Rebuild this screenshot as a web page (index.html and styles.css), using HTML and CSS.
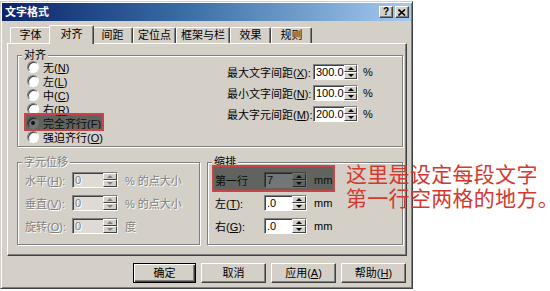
FILE: index.html
```html
<!DOCTYPE html>
<html>
<head>
<title>文字格式</title>
<link rel="stylesheet" href="styles.css">
</head>
<body>
<div class="stage">
    <div class="dialog">
        <div class="titlebar">
            <span class="title">文字格式</span>
            <span class="caps">
                <span class="cap">?</span>
                <span class="cap">
                    <svg width="8" height="7" viewBox="0 0 8 7"><path d="M0.5 0.5 L7 6.5 M7 0.5 L0.5 6.5" stroke="#000" stroke-width="1.6"/></svg>
                </span>
            </span>
        </div>

        <div class="tabs">
            <span class="tab">字体</span>
            <span class="tab active">对齐</span>
            <span class="tab">间距</span>
            <span class="tab">定位点</span>
            <span class="tab">框架与栏</span>
            <span class="tab">效果</span>
            <span class="tab">规则</span>
        </div>

        <div class="page">
            <fieldset class="group">
                <legend>对齐</legend>
                <div class="align-body">
                    <div class="radios">
                        <label class="radio"><span class="dot"></span><span>无(<u>N</u>)</span></label>
                        <label class="radio"><span class="dot"></span><span>左(<u>L</u>)</span></label>
                        <label class="radio"><span class="dot"></span><span>中(<u>C</u>)</span></label>
                        <label class="radio"><span class="dot"></span><span>右(<u>R</u>)</span></label>
                        <label class="radio mark"><span class="dot on"></span><span>完全齐行(<u>F</u>)</span></label>
                        <label class="radio"><span class="dot"></span><span>强迫齐行(<u>O</u>)</span></label>
                    </div>
                    <div class="spacing">
                        <div class="row">
                            <span class="lbl">最大文字间距(<u>X</u>):</span>
                            <span class="field"><span class="val">300.0</span><span class="spin"><i class="up"></i><i class="down"></i></span></span>
                            <span class="unit">%</span>
                        </div>
                        <div class="row">
                            <span class="lbl">最小文字间距(<u>N</u>):</span>
                            <span class="field"><span class="val">100.0</span><span class="spin"><i class="up"></i><i class="down"></i></span></span>
                            <span class="unit">%</span>
                        </div>
                        <div class="row">
                            <span class="lbl">最大字元间距(<u>M</u>):</span>
                            <span class="field"><span class="val">200.0</span><span class="spin"><i class="up"></i><i class="down"></i></span></span>
                            <span class="unit">%</span>
                        </div>
                    </div>
                </div>
            </fieldset>

            <div class="lower">
                <fieldset class="group shift disabled">
                    <legend>字元位移</legend>
                    <div class="rows">
                        <div class="row">
                            <span class="lbl">水平(<u>H</u>):</span>
                            <span class="field"><span class="val">0</span><span class="spin"><i class="up"></i><i class="down"></i></span></span>
                            <span class="unit">% 的点大小</span>
                        </div>
                        <div class="row">
                            <span class="lbl">垂直(<u>V</u>):</span>
                            <span class="field"><span class="val">0</span><span class="spin"><i class="up"></i><i class="down"></i></span></span>
                            <span class="unit">% 的点大小</span>
                        </div>
                        <div class="row">
                            <span class="lbl">旋转(<u>O</u>):</span>
                            <span class="field"><span class="val">0</span><span class="spin"><i class="up"></i><i class="down"></i></span></span>
                            <span class="unit">度</span>
                        </div>
                    </div>
                </fieldset>

                <fieldset class="group indent">
                    <legend>缩排</legend>
                    <div class="rows">
                        <div class="row mark">
                            <span class="lbl">第一行</span>
                            <span class="field"><span class="val">7</span><span class="spin"><i class="up"></i><i class="down"></i></span></span>
                            <span class="unit">mm</span>
                        </div>
                        <div class="row">
                            <span class="lbl">左(<u>T</u>):</span>
                            <span class="field"><span class="val">.0</span><span class="spin"><i class="up"></i><i class="down"></i></span></span>
                            <span class="unit">mm</span>
                        </div>
                        <div class="row">
                            <span class="lbl">右(<u>G</u>):</span>
                            <span class="field"><span class="val">.0</span><span class="spin"><i class="up"></i><i class="down"></i></span></span>
                            <span class="unit">mm</span>
                        </div>
                    </div>
                </fieldset>
            </div>
        </div>

        <div class="actions">
            <button class="btn default">确定</button>
            <button class="btn">取消</button>
            <button class="btn">应用(<u>A</u>)</button>
            <button class="btn">帮助(<u>H</u>)</button>
        </div>
    </div>

    <div class="note">这里是设定每段文字<br>第一行空两格的地方。</div>
</div>
</body>
</html>
```

FILE: styles.css
```css
body {
    margin: 0;
    background-color: #ffffff;
    font-family: "Liberation Sans", "Noto Sans CJK SC", sans-serif;
    font-size: 11px;
    color: #000000;
}

.stage {
    position: relative;
    width: 550px;
    height: 291px;
    overflow: hidden;
}

u {
    text-decoration: underline;
    text-underline-offset: 1px;
}

/* window frame */
.dialog {
    box-sizing: border-box;
    width: 413px;
    height: 288px;
    margin-top: 1px;
    padding: 1px;
    background-color: #d4d0c8;
    border: 1px solid;
    border-color: #d4d0c8 #404040 #404040 #d4d0c8;
    box-shadow: inset 1px 1px 0 #ffffff, inset -1px -1px 0 #808080;
}

.titlebar {
    height: 18px;
    display: flex;
    align-items: center;
    justify-content: space-between;
    padding: 0 2px 0 3px;
    background: linear-gradient(to right, #0a246a, #3a6ea5 45%, #a6caf0);
}

.title {
    color: #ffffff;
    font-weight: bold;
    line-height: 18px;
}

.caps {
    display: flex;
    gap: 2px;
}

.cap {
    box-sizing: border-box;
    width: 14px;
    height: 12px;
    display: flex;
    align-items: center;
    justify-content: center;
    background-color: #d4d0c8;
    border: 1px solid;
    border-color: #ffffff #404040 #404040 #ffffff;
    box-shadow: inset -1px -1px 0 #808080;
    font-weight: bold;
    font-size: 10px;
    line-height: 10px;
}

/* tabs */
.tabs {
    display: flex;
    align-items: flex-end;
    height: 18px;
    margin-top: 4px;
    padding-left: 8px;
}

.tab {
    box-sizing: border-box;
    min-width: 41px;
    height: 16px;
    padding: 0 4px;
    text-align: center;
    line-height: 14px;
    border-top: 1px solid #ffffff;
    border-left: 1px solid #ffffff;
    border-right: 1px solid #404040;
    border-radius: 2px 2px 0 0;
    box-shadow: inset -1px 0 0 #808080;
}

.tab.active {
    position: relative;
    z-index: 1;
    min-width: 45px;
    height: 19px;
    margin: 0 -2px -1px;
    line-height: 16px;
    background-color: #d4d0c8;
}

.page {
    box-sizing: border-box;
    height: 213px;
    margin: 0 4px 0 5px;
    padding: 6px 3px 0 9px;
    border: 1px solid;
    border-color: #ffffff #404040 #404040 #ffffff;
    box-shadow: inset -1px -1px 0 #808080;
}

/* group boxes */
.group {
    margin: 0;
    padding: 0;
    min-width: 0;
    border: 1px solid #808080;
    box-shadow: inset 1px 1px 0 #ffffff, 1px 1px 0 #ffffff;
}

.group legend {
    margin-left: 4px;
    padding: 0 2px;
    line-height: 10px;
    background-color: #d4d0c8;
}

.align-body {
    display: flex;
    padding: 0 0 2px 9px;
}

.radios {
    width: 200px;
    display: flex;
    flex-direction: column;
    align-items: flex-start;
}

.radio {
    display: flex;
    align-items: center;
    gap: 4px;
    height: 14px;
    white-space: nowrap;
}

.dot {
    box-sizing: border-box;
    position: relative;
    width: 12px;
    height: 12px;
    border-radius: 50%;
    background-color: #ffffff;
    border: 1px solid;
    border-color: #808080 #ffffff #ffffff #808080;
    box-shadow: inset 1px 1px 0 #404040;
}

.dot.on::after {
    content: '';
    position: absolute;
    left: 3px;
    top: 3px;
    width: 4px;
    height: 4px;
    border-radius: 50%;
    background-color: #000000;
}

/* red highlight frames drawn over the dialog */
.mark {
    position: relative;
}

.mark::after {
    content: '';
    position: absolute;
    top: -3px;
    right: -3px;
    bottom: -1px;
    left: -3px;
    border: 2px solid #c8444a;
    background-color: rgba(20, 26, 24, 0.6);
}

.spacing {
    display: flex;
    flex-direction: column;
    padding-top: 1px;
}

.row {
    display: flex;
    align-items: center;
    height: 21px;
    white-space: nowrap;
}

.lbl {
    flex-shrink: 0;
}

.spacing .lbl {
    width: 86px;
}

.unit {
    margin-left: 5px;
}

.field {
    box-sizing: border-box;
    flex-shrink: 0;
    display: flex;
    align-items: center;
    width: 45px;
    height: 16px;
    background-color: #ffffff;
    border: 1px solid;
    border-color: #808080 #ffffff #ffffff #808080;
    box-shadow: inset 1px 1px 0 #404040;
}

.val {
    flex: 1;
    padding-left: 2px;
    line-height: 14px;
}

.spin {
    box-sizing: border-box;
    width: 14px;
    height: 14px;
    display: flex;
    flex-direction: column;
}

.spin i {
    position: relative;
    flex: 1;
    background-color: #d4d0c8;
    border: 1px solid;
    border-color: #ffffff #404040 #404040 #ffffff;
}

.spin i::after {
    content: '';
    position: absolute;
    left: 3px;
    top: 1px;
    border-left: 3px solid transparent;
    border-right: 3px solid transparent;
}

.spin .up::after {
    border-bottom: 3px solid #000000;
}

.spin .down::after {
    border-top: 3px solid #000000;
}

/* lower groups */
.lower {
    display: flex;
    gap: 7px;
    margin-top: 10px;
}

.shift {
    width: 181px;
}

.indent {
    flex: 1;
}

.rows {
    display: flex;
    flex-direction: column;
    align-items: flex-start;
    padding: 1px 0 7px 7px;
}

.rows .row {
    height: 23px;
}

.rows .unit {
    margin-left: 7px;
}

.shift .lbl {
    width: 47px;
}

.shift .field {
    width: 46px;
}

.indent .lbl {
    width: 49px;
}

.indent .field {
    width: 43px;
}

.disabled legend,
.disabled .lbl,
.disabled .unit,
.disabled .val {
    color: #808080;
    text-shadow: 1px 1px 0 #ffffff;
}

.disabled .field {
    background-color: #dedbd5;
}

.disabled .spin .up::after {
    border-bottom-color: #808080;
}

.disabled .spin .down::after {
    border-top-color: #808080;
}

/* buttons */
.actions {
    display: flex;
    justify-content: flex-end;
    gap: 5px;
    margin-top: 7px;
    padding-right: 5px;
}

.btn {
    box-sizing: border-box;
    width: 65px;
    height: 20px;
    padding: 0;
    font-family: inherit;
    font-size: 11px;
    line-height: 16px;
    background-color: #d4d0c8;
    color: #000000;
    border: 1px solid;
    border-color: #ffffff #404040 #404040 #ffffff;
    box-shadow: inset -1px -1px 0 #808080;
}

.btn.default {
    width: 63px;
    border-color: #000000;
    box-shadow: inset 1px 1px 0 #ffffff, inset -1px -1px 0 #404040, inset -2px -2px 0 #808080;
}

/* annotation written on top of the screenshot */
.note {
    position: absolute;
    left: 346px;
    top: 161px;
    font-family: "Noto Sans CJK SC", sans-serif;
    font-size: 21px;
    line-height: 24px;
    letter-spacing: 0.3px;
    color: #d4382e;
    white-space: nowrap;
}
```
